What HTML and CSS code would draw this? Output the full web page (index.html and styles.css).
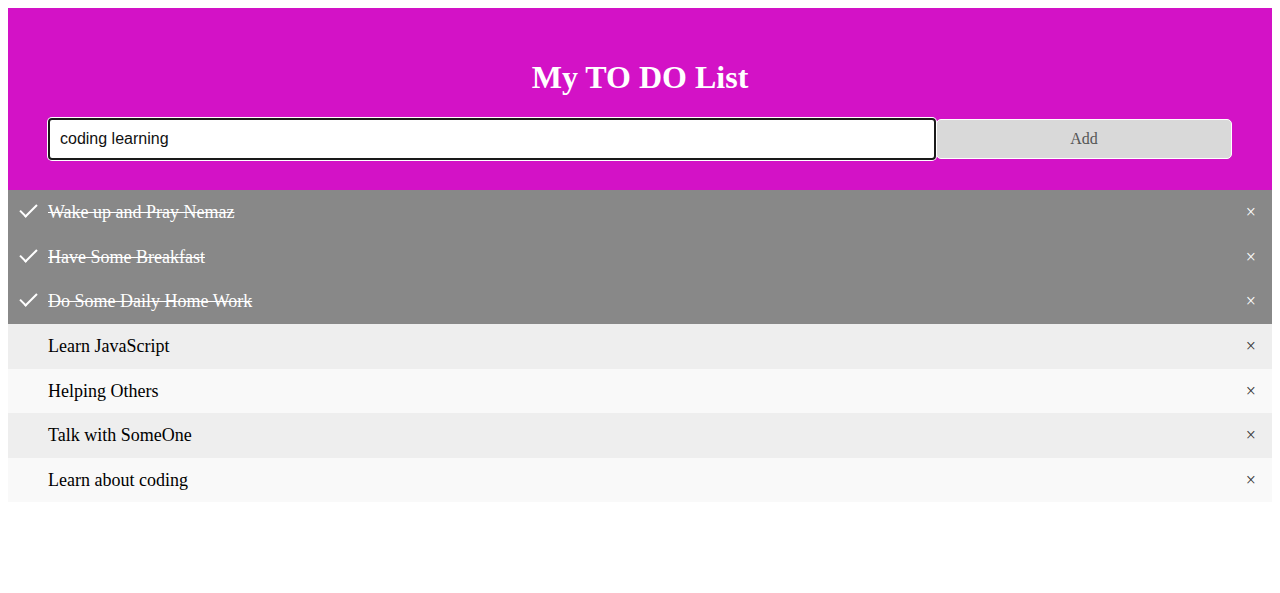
FILE: index.html
```html
<!DOCTYPE html>
<html lang="en">
<head>
<meta charset="utf-8">
<title>My TO DO List</title>
<link rel="stylesheet" href="styles.css">
</head>
<body>
  <div class="header">
    <h1 class="title">My TO DO List</h1>
    <div class="entry">
      <input class="task-input" type="text" value="coding learning" placeholder="Title...">
      <span class="add-btn">Add</span>
    </div>
  </div>
  <ul class="todo-list">
    <li class="item checked">Wake up and Pray Nemaz<span class="close">×</span></li>
    <li class="item checked">Have Some Breakfast<span class="close">×</span></li>
    <li class="item checked">Do Some Daily Home Work<span class="close">×</span></li>
    <li class="item">Learn JavaScript<span class="close">×</span></li>
    <li class="item">Helping Others<span class="close">×</span></li>
    <li class="item">Talk with SomeOne<span class="close">×</span></li>
    <li class="item">Learn about coding<span class="close">×</span></li>
  </ul>
</body>
</html>
```
FILE: styles.css
```css
* {
  box-sizing: border-box;
}

body {
  margin: 8px;
  font-family: "Liberation Serif", "Times New Roman", serif;
  background: #fff;
}

.header {
  background-color: #d312c6;
  padding: 30px 40px;
  color: #fff;
  text-align: center;
}

.title {
  font-size: 32px;
  font-weight: bold;
  margin: 21.44px 0;
  line-height: normal;
}

.entry {
  display: flex;
  align-items: stretch;
}

.task-input {
  width: 75%;
  margin: 0;
  padding: 10px;
  font-family: "Liberation Sans", Arial, sans-serif;
  font-size: 16px;
  color: #111;
  background: #fff;
  border: 2px solid #1a1a1a;
  border-radius: 4px;
  box-shadow: 0 0 0 1px #fff;
  outline: none;
  line-height: 18.4px;
}

.add-btn {
  width: 25%;
  padding: 10px;
  background: #d9d9d9;
  color: #555;
  text-align: center;
  font-size: 16px;
  line-height: 18.4px;
  border: 1px solid #fff;
  border-radius: 5px;
  margin: 1px 0;
  display: flex;
  align-items: center;
  justify-content: center;
}

.todo-list {
  margin: 0;
  padding: 0;
  list-style: none;
}

.item {
  position: relative;
  padding: 12px 8px 12px 40px;
  background: #eee;
  font-size: 18px;
  color: #000;
  line-height: 20.57px;
}

.item:nth-child(odd) {
  background: #f9f9f9;
}

.item.checked {
  background: #888;
  color: #fff;
  text-decoration: line-through;
}

.item.checked::before {
  content: "";
  position: absolute;
  border-color: #fff;
  border-style: solid;
  border-width: 0 2px 2px 0;
  top: 10px;
  left: 16px;
  transform: rotate(45deg);
  height: 15px;
  width: 7px;
}

.close {
  position: absolute;
  right: 0;
  top: 0;
  padding: 12px 16px;
  line-height: 20.57px;
  color: #333;
  text-decoration: none;
}

.item.checked .close {
  color: #fff;
}
```
